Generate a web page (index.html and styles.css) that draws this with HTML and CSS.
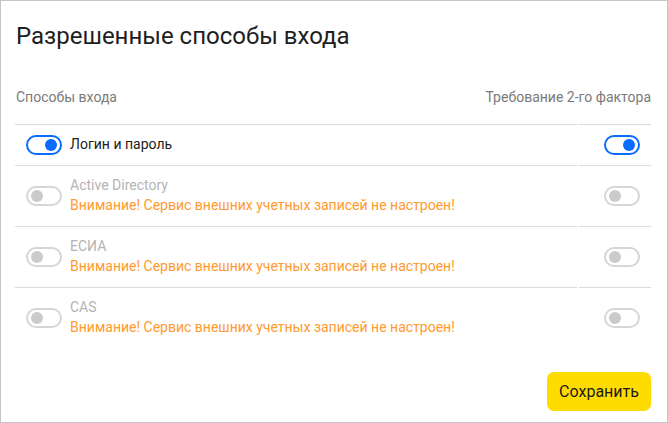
FILE: index.html
```html
<!DOCTYPE html>
<html>
	<head>
		<meta charset="utf-8">
		<title>Разрешенные способы входа</title>
		<link rel="stylesheet" href="styles.css">
	</head>
	<body>
		<div class="dialog">
			<h1 class="title">Разрешенные способы входа</h1>
			<div class="head">
				<span>Способы входа</span>
				<span>Требование 2-го фактора</span>
			</div>
			<div class="row row-short">
				<div class="cell cell-main">
					<span class="toggle on"><i></i></span>
					<div class="label">Логин и пароль</div>
				</div>
				<div class="cell cell-side">
					<span class="toggle on"><i></i></span>
				</div>
			</div>
			<div class="row">
				<div class="cell cell-main">
					<span class="toggle off"><i></i></span>
					<div class="label">
						<div class="name-off">Active Directory</div>
						<div class="warn">Внимание! Сервис внешних учетных записей не настроен!</div>
					</div>
				</div>
				<div class="cell cell-side">
					<span class="toggle off"><i></i></span>
				</div>
			</div>
			<div class="row">
				<div class="cell cell-main">
					<span class="toggle off"><i></i></span>
					<div class="label">
						<div class="name-off">ЕСИА</div>
						<div class="warn">Внимание! Сервис внешних учетных записей не настроен!</div>
					</div>
				</div>
				<div class="cell cell-side">
					<span class="toggle off"><i></i></span>
				</div>
			</div>
			<div class="row">
				<div class="cell cell-main">
					<span class="toggle off"><i></i></span>
					<div class="label">
						<div class="name-off">CAS</div>
						<div class="warn">Внимание! Сервис внешних учетных записей не настроен!</div>
					</div>
				</div>
				<div class="cell cell-side">
					<span class="toggle off"><i></i></span>
				</div>
			</div>
			<div class="actions">
				<button class="btn-save" type="button">Сохранить</button>
			</div>
		</div>
	</body>
</html>
```

FILE: styles.css
```css
html, body{
	margin: 0;
	padding: 0;
	width: 100%;
	height: 100%;
}
body{
	background: #fff;
	font-family: Roboto, "Liberation Sans", sans-serif;
	color: #212121;
}
.dialog{
	box-sizing: border-box;
	width: 668px;
	height: 423px;
	border: 1px solid #c4c4c4;
	padding: 0 16px 0 14px;
}
.title{
	margin: 21px 0 0 1px;
	font-size: 24px;
	line-height: 28px;
	font-weight: 400;
	color: #1e1e1e;
}
.head{
	display: flex;
	justify-content: space-between;
	margin-top: 37px;
	padding: 0 0 17px 1px;
	font-size: 14px;
	line-height: 20px;
	color: #7a7a7a;
}
.row{
	display: grid;
	grid-template-columns: 1fr 72px;
	column-gap: 2px;
	height: 61px;
}
.row-short{
	height: 41px;
}
.cell{
	border-top: 1px solid #dcdcdc;
	display: flex;
	align-items: center;
}
.cell-main{
	padding-left: 11px;
}
.cell-side{
	justify-content: flex-end;
	padding-right: 11px;
}
.label{
	margin: -2px 0 0 8px;
	font-size: 14px;
	line-height: 20px;
}
.name-off{
	color: #b4b4b4;
}
.warn{
	color: #ff9a2e;
}
.toggle{
	box-sizing: border-box;
	display: inline-flex;
	align-items: center;
	width: 36px;
	height: 20px;
	border-radius: 10px;
	border: 2px solid #0a6cff;
	padding: 0 3px;
	flex-shrink: 0;
}
.toggle i{
	display: block;
	width: 12px;
	height: 12px;
	border-radius: 50%;
	background: #0a6cff;
}
.toggle.on{
	justify-content: flex-end;
}
.toggle.off{
	border-color: #d6d6d6;
}
.toggle.off i{
	background: #cbcbcb;
}
.actions{
	display: flex;
	justify-content: flex-end;
	margin-top: 24px;
}
.btn-save{
	width: 104px;
	height: 39px;
	border: none;
	border-radius: 7px;
	background: #ffdc00;
	font-family: Roboto, "Liberation Sans", sans-serif;
	font-size: 16px;
	color: #1a1a1a;
	padding: 0;
}
```
